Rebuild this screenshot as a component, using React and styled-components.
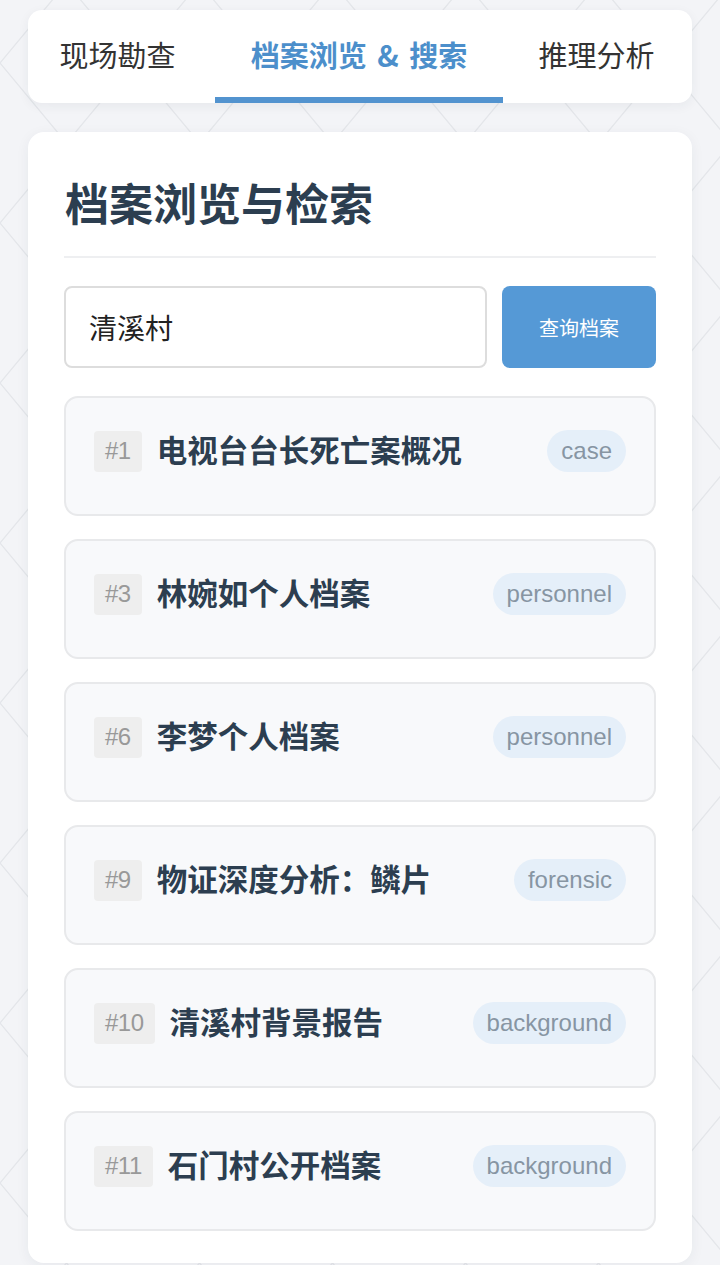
import React from "react";
import styled, { createGlobalStyle } from "styled-components";

const pattern = `url("data:image/svg+xml,%3Csvg xmlns='http://www.w3.org/2000/svg' width='133' height='160'%3E%3Cpath d='M0 0L66.5 80L0 160M133 0L66.5 80L133 160' stroke='%23e4e6ea' stroke-width='1.3' fill='none'/%3E%3C/svg%3E")`;

const GlobalStyle = createGlobalStyle`
  html, body {
    margin: 0;
    padding: 0;
  }
  body {
    background-color: #f3f4f7;
    background-image: ${pattern};
    background-position: 0 63px;
    font-family: "Liberation Sans", "Noto Sans CJK SC", sans-serif;
    color: #2c3e50;
  }
  * {
    box-sizing: border-box;
  }
`;

const tabs = [
  { label: "现场勘查" },
  { label: "档案浏览 & 搜索", active: true },
  { label: "推理分析" },
];

const records = [
  { id: 1, title: "电视台台长死亡案概况", type: "case" },
  { id: 3, title: "林婉如个人档案", type: "personnel" },
  { id: 6, title: "李梦个人档案", type: "personnel" },
  { id: 9, title: "物证深度分析：鳞片", type: "forensic" },
  { id: 10, title: "清溪村背景报告", type: "background" },
  { id: 11, title: "石门村公开档案", type: "background" },
];

const App = () => {
  return (
    <Page>
      <GlobalStyle />
      <TabBar>
        {tabs.map((t) => (
          <Tab key={t.label} active={t.active}>
            {t.label}
          </Tab>
        ))}
      </TabBar>

      <Panel>
        <Title>档案浏览与检索</Title>
        <SearchRow>
          <SearchInput defaultValue="清溪村" />
          <SearchButton>查询档案</SearchButton>
        </SearchRow>
        <List>
          {records.map((r) => (
            <Item key={r.id}>
              <ItemRow>
                <IdBadge>#{r.id}</IdBadge>
                <ItemTitle>{r.title}</ItemTitle>
                <TypeTag>{r.type}</TypeTag>
              </ItemRow>
            </Item>
          ))}
        </List>
      </Panel>
    </Page>
  );
};

export default App;

const Page = styled.div`
  padding: 10px 28px 2px;
  display: flex;
  flex-direction: column;
  gap: 29px;
`;

const TabBar = styled.div`
  display: flex;
  height: 93px;
  background: #fff;
  border-radius: 14px;
  box-shadow: 0 3px 12px rgba(40, 50, 70, 0.06);
  overflow: hidden;
  padding-right: 2px;
`;

const Tab = styled.div`
  flex: 1 1 auto;
  display: flex;
  align-items: center;
  justify-content: center;
  padding: 0 34px;
  font-family: "Noto Sans CJK SC", sans-serif;
  font-size: 29px;
  white-space: nowrap;
  word-spacing: 4px;
  color: ${(p) => (p.active ? "#4c8fcb" : "#333")};
  font-weight: ${(p) => (p.active ? 700 : 400)};
  border-bottom: 6px solid ${(p) => (p.active ? "#5293cf" : "transparent")};

  &:first-child {
    padding-left: 30px;
    padding-right: 38px;
  }
`;

const Panel = styled.div`
  background: #fff;
  border-radius: 16px;
  box-shadow: 0 3px 14px rgba(40, 50, 70, 0.06);
  padding: 42px 36px 32px;
`;

const Title = styled.h1`
  margin: 0;
  font-family: "Noto Sans CJK SC", sans-serif;
  font-size: 44px;
  line-height: 57px;
  font-weight: 700;
  color: #2c3e50;
  padding: 0 0 25px 1px;
  border-bottom: 2px solid #eeeff1;
`;

const SearchRow = styled.div`
  display: flex;
  gap: 15px;
  margin-top: 28px;
`;

const SearchInput = styled.input`
  flex: 1;
  min-width: 0;
  height: 82px;
  border: 2px solid #dddddd;
  border-radius: 8px;
  padding: 0 23px;
  font-family: "Noto Sans CJK SC", sans-serif;
  font-size: 28px;
  color: #222;
  background: #fff;
  outline: none;
`;

const SearchButton = styled.button`
  width: 154px;
  height: 82px;
  border: none;
  border-radius: 8px;
  background: #5599d6;
  color: #fff;
  font-family: "Noto Sans CJK SC", sans-serif;
  font-size: 20px;
  cursor: pointer;
`;

const List = styled.div`
  display: flex;
  flex-direction: column;
  gap: 23px;
  margin-top: 28px;
`;

const Item = styled.div`
  height: 120px;
  background: #f8f9fb;
  border: 2px solid #e8e9eb;
  border-radius: 14px;
  padding: 29px 28px 0;
`;

const ItemRow = styled.div`
  display: flex;
  align-items: center;
  height: 48px;
`;

const IdBadge = styled.span`
  display: inline-flex;
  align-items: center;
  justify-content: center;
  height: 41px;
  padding: 0 11px;
  background: #eeeeee;
  border-radius: 4px;
  color: #999;
  font-family: "Liberation Sans", sans-serif;
  font-size: 24px;
  letter-spacing: -0.5px;
`;

const ItemTitle = styled.span`
  flex: 1;
  margin-left: 15px;
  padding-bottom: 4px;
  font-family: "Noto Sans CJK SC", sans-serif;
  font-size: 30.5px;
  line-height: 1.2;
  font-weight: 700;
  color: #2c3e50;
  white-space: nowrap;
`;

const TypeTag = styled.span`
  display: inline-flex;
  align-items: center;
  height: 42px;
  padding: 0 14px;
  border-radius: 21px;
  background: #e5eff9;
  color: #8795a3;
  font-family: "Liberation Sans", sans-serif;
  font-size: 24px;
`;
